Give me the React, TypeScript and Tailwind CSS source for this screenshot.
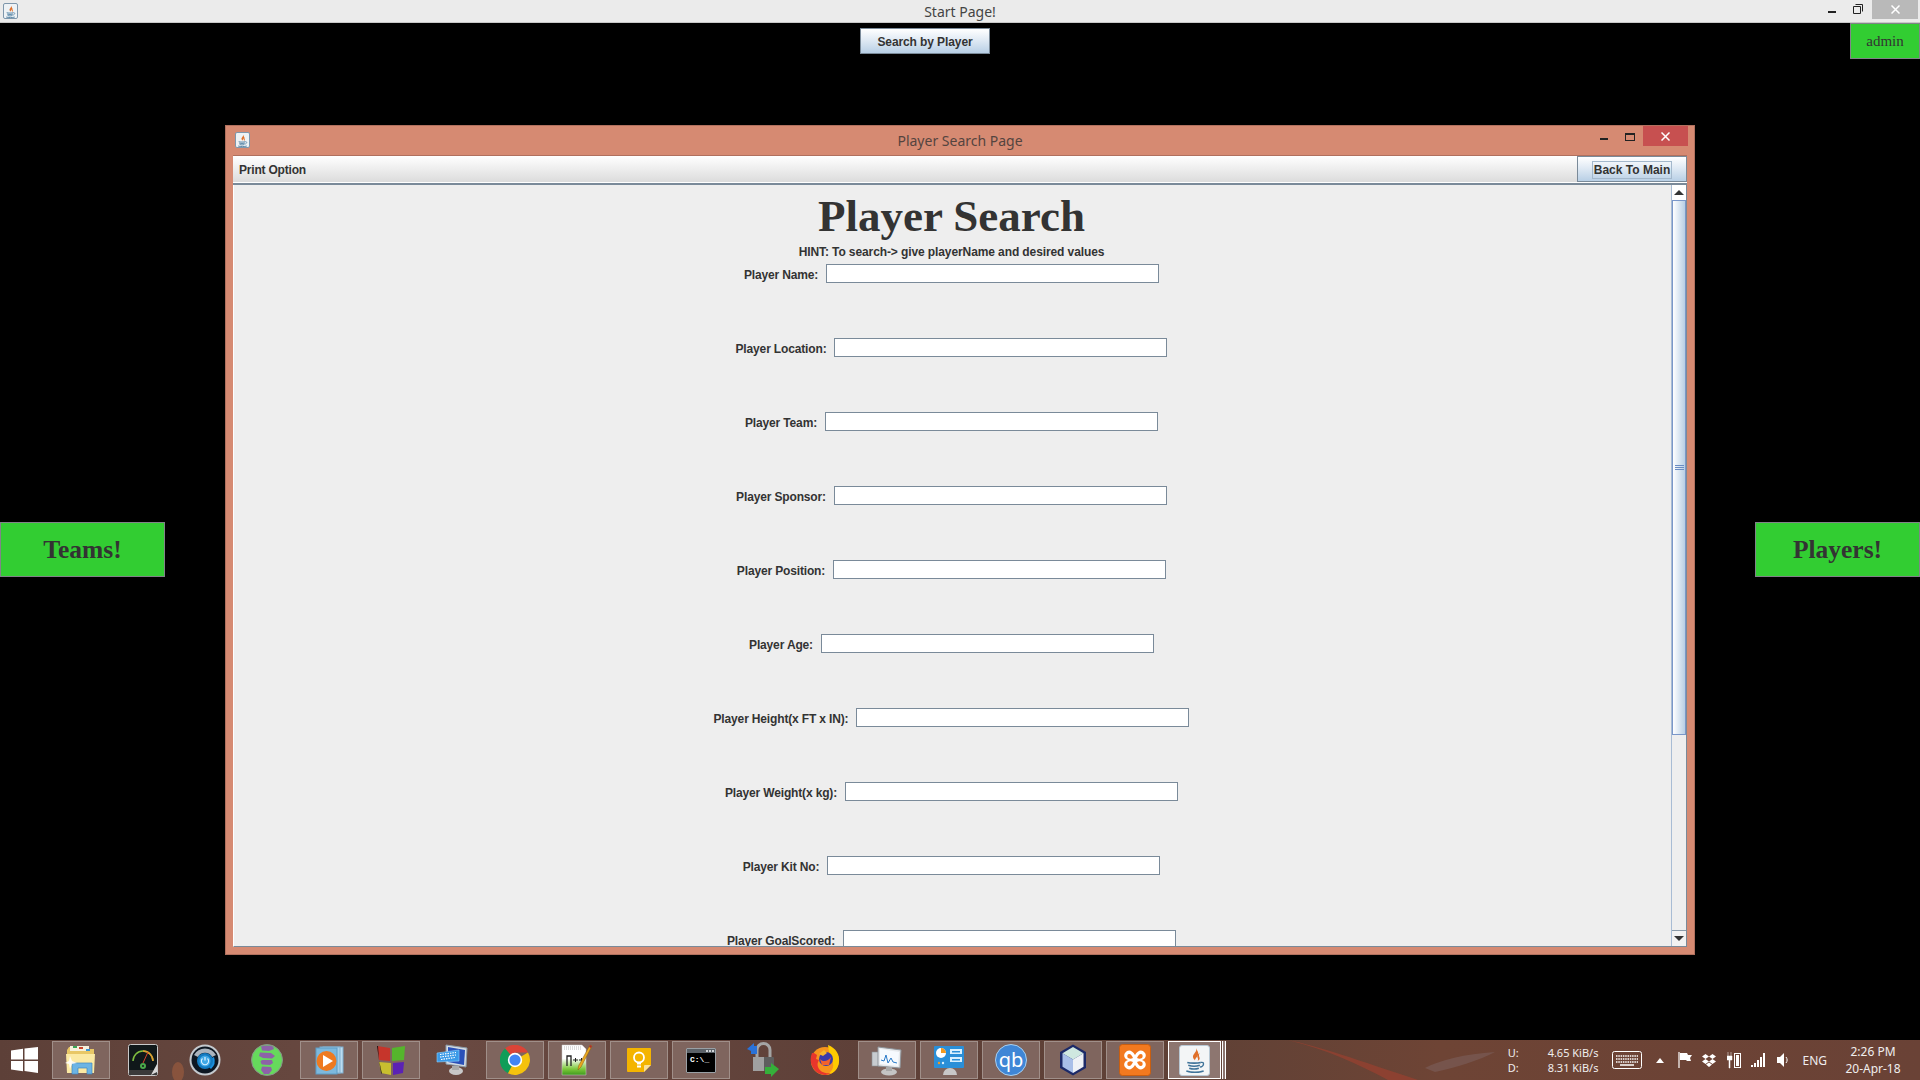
const rows = [
  "Player Name:",
  "Player Location:",
  "Player Team:",
  "Player Sponsor:",
  "Player Position:",
  "Player Age:",
  "Player Height(x FT x IN):",
  "Player Weight(x kg):",
  "Player Kit No:",
  "Player GoalScored:",
];

const JavaCup = ({ size = 16 }: { size?: number }) => (
  <svg width={size} height={size} viewBox="5 2 22 27">
    <path d="M17 3c2 4-4 6-3 10 .4 1.500 1.500 2 2 3-.4-2 5-5 3-9-.5-1-1.200-2.600-2-4z" fill="#e0702a" />
    <path d="M21 8c-3 2-3 4-2 6 .4 1 .2 2-.5 2.500 2-.5 3-2 2-4-.6-1.500-.5-3 .5-4.500z" fill="#e0702a" />
    <path d="M8 18c3 1 11 1 14 0M9 21c3 1 9 1 12 0M10 24c3 1 7 1 10 0M7 27c5 1.500 13 1.500 18 0" stroke="#3f7399" strokeWidth="1.700" fill="none" />
    <path d="M22 18c4-1 4 4-1 5" stroke="#3f7399" strokeWidth="1.300" fill="none" />
  </svg>
);

const WindowIcon = () => (
  <div className="flex h-[16px] w-[15px] items-center justify-center rounded-[2px] border border-[#7f97ac] bg-[#eef2f5]">
    <JavaCup size={13} />
  </div>
);

const Explorer = () => (
  <svg width="34" height="34" viewBox="0 0 34 34">
    <path d="M3 7l2-3h14l2 2h9v22H3z" fill="#e8c766" />
    <rect x="6" y="3" width="19" height="5" fill="#f6f1dc" />
    <rect x="9" y="3" width="4" height="2" fill="#3aa655" />
    <rect x="15" y="4" width="4" height="2" fill="#c9452f" />
    <rect x="22" y="6" width="4" height="2" fill="#3a96d8" />
    <path d="M2 11h29l-1 19H3z" fill="#fbe9a3" />
    <path d="M8 20h20v11h-5v-6H14v6H8z" fill="#6cb4e4" stroke="#3f86bf" strokeWidth=".7" />
    <path d="M6 13l2 5 5 2-5 1-2 5-1-5-4-1 4-2z" fill="#ffffff" opacity=".85" />
  </svg>
);

const Meter = () => (
  <svg width="30" height="32" viewBox="0 0 30 32">
    <rect x=".5" y=".5" width="29" height="31" rx="2" fill="#10181a" stroke="#c9c9c9" />
    <rect x="1" y="26" width="28" height="5" fill="#3a3a3a" />
    <path d="M5 17a10 10 0 0 1 20 0" fill="none" stroke="#7fbf3f" strokeWidth="1.500" />
    <path d="M15 7a10 10 0 0 1 10 10" fill="none" stroke="#e09a30" strokeWidth="1.500" />
    <path d="M15 19l5-11" stroke="#d8402a" strokeWidth="1" />
    <circle cx="15" cy="22" r="3" fill="#4ba84a" />
    <circle cx="15" cy="22" r="1" fill="#10181a" />
    <path d="M29 20v8l-6 3z" fill="#d8d8d8" />
  </svg>
);

const PowerOrb = () => (
  <svg width="32" height="32" viewBox="0 0 32 32">
    <circle cx="16" cy="16" r="15.500" fill="#c4c9ce" />
    <circle cx="16" cy="16" r="13.500" fill="#0d1722" />
    <path d="M5 11a12.500 12.500 0 0 1 22 0l-4 2a8 8 0 0 0-14 0z" fill="#aab4be" />
    <path d="M25 13a11 11 0 0 1-3 12l-3-3a7 7 0 0 0 2-7z" fill="#1b8fdc" />
    <circle cx="16" cy="17" r="8" fill="#127ac0" />
    <circle cx="16" cy="17" r="5.500" fill="#3fa8e6" />
    <path d="M16 13v3.500" stroke="#d8f0ff" strokeWidth="1.300" />
    <path d="M13.500 14.500a3.600 3.600 0 1 0 5 0" stroke="#d8f0ff" strokeWidth="1.100" fill="none" />
  </svg>
);

const Globe = () => (
  <svg width="32" height="32" viewBox="0 0 32 32">
    <circle cx="16" cy="16" r="15.500" fill="#66d95c" stroke="#8a8f8a" />
    <path d="M10 2.500c4-1.500 8-1.500 12 0l1 2.500-5 2-7-.5z" fill="#8d62a8" />
    <path d="M9 8.500l11 .5 4 3-3 2.500-9-.5-4-2z" fill="#8d62a8" />
    <path d="M11 16h10l1 3-3 2-8-.5-2-2.500z" fill="#8d62a8" />
    <path d="M11 22.500l9 .5 1 3-3 4h-5l-3-4z" fill="#8d62a8" />
    <path d="M2 12l4 1 1 3 3 2-1 3-4-1-3-4zM27 11l3 2 .5 5-2 3-3-1v-4z" fill="#66d95c" />
  </svg>
);

const Media = () => (
  <svg width="30" height="30" viewBox="0 0 30 30">
    <rect x="9" y="2" width="20" height="26" fill="#bcdcf0" stroke="#7fb0d0" />
    <rect x="6" y="2" width="20" height="26" fill="#a6cfe8" stroke="#7fb0d0" />
    <rect x="2" y="3" width="21" height="26" fill="#7db9dd" stroke="#5d9cc4" />
    <circle cx="12.500" cy="16" r="10" fill="#ee7a20" />
    <path d="M9 10l10 6-10 6z" fill="#ffffff" />
  </svg>
);

const WinFlag = () => (
  <svg width="32" height="32" viewBox="0 0 32 32">
    <path d="M2 2l13 2v13L4 16z" fill="#c6352b" />
    <path d="M17 4l13-2-1 14-12 1z" fill="#55b52c" />
    <path d="M4 18l12 1v12L6 29z" fill="#c8bf2f" />
    <path d="M18 19l11-1-1 11-10 2z" fill="#5b22b4" />
    <path d="M2 2l2 14 2 13 1 1-3-14-1-14z" fill="#161616" />
  </svg>
);

const KeyboardPc = () => (
  <svg width="34" height="34" viewBox="0 0 34 34">
    <path d="M10 2l21 3-1 19-20-3z" fill="#d4dbe2" stroke="#8b99a6" />
    <path d="M12 4l17 3-1 15-16-3z" fill="#2a50b8" />
    <ellipse cx="20" cy="28" rx="7" ry="4" fill="#c8c8c8" />
    <rect x="16" y="23" width="7" height="4" fill="#aaaaaa" />
    <path d="M1 10l22-3v11L1 19z" fill="#3a9ae8" stroke="#8fd0fb" strokeWidth=".6" />
    <path d="M4 11.500l16-2M4 14l16-2M5 16.500l14-2" stroke="#ffffff" strokeWidth="1.200" strokeDasharray="1.500 1" />
  </svg>
);

const Chrome = () => (
  <svg width="30" height="30" viewBox="0 0 30 30">
    <path d="M15 15L5 3.500A15 15 0 0 1 28 7.500H15z" fill="#db4437" />
    <path d="M15 15L5 3.500A15 15 0 0 0 8 28.200z" fill="#0f9d58" />
    <path d="M15 15L28 7.500A15 15 0 0 1 8 28.200z" fill="#f4c20d" />
    <circle cx="15" cy="15" r="7.200" fill="#ffffff" />
    <circle cx="15" cy="15" r="5.600" fill="#4285f4" />
  </svg>
);

const NotepadPP = () => (
  <svg width="32" height="34" viewBox="0 0 32 34">
    <defs>
      <linearGradient id="npp" x1="0" y1="0" x2="0" y2="1">
        <stop offset="0.450" stopColor="#ffffff" />
        <stop offset="0.800" stopColor="#7cc83a" />
        <stop offset="1" stopColor="#3f9a1e" />
      </linearGradient>
    </defs>
    <path d="M1 2h20l4 4v26H1z" fill="url(#npp)" stroke="#c8c8c8" strokeWidth=".5" />
    <path d="M3 4h17M3 6h17" stroke="#a8a8a8" strokeWidth=".8" strokeDasharray="1 1" />
    <path d="M6 23V13h4v10" fill="none" stroke="#222222" strokeWidth="1.300" />
    <path d="M12 17h5M14.500 15v4M18 17h5M20.500 15v4" stroke="#222222" strokeWidth="1" />
    <path d="M29 2l2 1-11 21-3 3 .5-4z" fill="#e8a820" stroke="#8a5a10" strokeWidth=".5" />
    <path d="M29 2l2 1-1 2-2-1z" fill="#a83030" />
  </svg>
);

const Keep = () => (
  <svg width="26" height="26" viewBox="0 0 26 26">
    <path d="M1 2a1 1 0 0 1 1-1h22a1 1 0 0 1 1 1v16l-7 7H2a1 1 0 0 1-1-1z" fill="#f4b400" />
    <path d="M25 18h-6a1 1 0 0 0-1 1v6z" fill="#fae09a" />
    <circle cx="13" cy="10.500" r="5" fill="none" stroke="#ffffff" strokeWidth="1.800" />
    <path d="M11 16.500h4M11 19.500h4" stroke="#ffffff" strokeWidth="1.800" />
  </svg>
);

const Cmd = () => (
  <div className="flex h-[25px] w-[30px] flex-col rounded-[1px] border border-[#9aa0a5] bg-black">
    <div className="flex h-[4px] justify-end gap-[1px] bg-[#5b6167] pr-[1px] pt-[1px]">
      <div className="size-[2px] bg-[#cfd3d6]" />
      <div className="size-[2px] bg-[#cfd3d6]" />
      <div className="size-[2px] bg-[#cfd3d6]" />
    </div>
    <div className="pl-[3px] pt-[2px] font-['Liberation_Mono',monospace] text-[8px] leading-[10px] font-bold text-white">C:\_</div>
  </div>
);

const LockSync = () => (
  <svg width="34" height="36" viewBox="0 0 34 36">
    <path d="M11 15V8a6.500 6.500 0 0 1 13 0v7" fill="none" stroke="#a4a4a4" strokeWidth="3" />
    <rect x="7" y="15" width="21" height="14" rx="1" fill="#5e5e5e" />
    <rect x="7" y="15" width="11" height="14" fill="#a0a0a0" />
    <path d="M1 7l7-6v3h3v8H5V9z" fill="#2a72d8" />
    <path d="M33 27l-8 8v-3h-6v-7h6v-4z" fill="#35b03a" />
  </svg>
);

const Firefox = () => (
  <svg width="30" height="32" viewBox="0 0 30 32">
    <circle cx="15" cy="17" r="14" fill="#f7941e" />
    <path d="M18 1c8 3 12 10 11 17-1 8-7 13-14 13 6-2 9-6 8-12-1-5-4-8-5-18z" fill="#ffcb00" />
    <path d="M2 9c-3 7-1 15 6 20 4 2 9 3 13 0-6 1-11-1-13-6-1-3 0-5 1-7l-3-1 1-4-3-2z" fill="#e8362c" />
    <circle cx="16" cy="15" r="7" fill="#3b3aa8" />
    <path d="M10 15c2 3 8 3 11-2l-2 8-7 0z" fill="#f2622c" />
    <path d="M9 10l5-4 3 3-4 3z" fill="#f7b52c" />
  </svg>
);

const PerfMon = () => (
  <svg width="32" height="32" viewBox="0 0 32 32">
    <rect x="1" y="8" width="7" height="14" fill="#c8ccd0" stroke="#8a8f94" strokeWidth=".6" />
    <path d="M7 3l23 3-1 18-22-2z" fill="#e6e9ec" stroke="#8f959b" />
    <path d="M9 5l19 3-1 14-18-2z" fill="#f6fafe" />
    <path d="M10 16l3 1 2-6 2 8 3-5 2 4 4 1" fill="none" stroke="#2a7ac8" strokeWidth="1" />
    <ellipse cx="18" cy="28" rx="8" ry="3.500" fill="#c4c4c4" />
    <rect x="15" y="23" width="6" height="4" fill="#a8a8a8" />
  </svg>
);

const ControlPanel = () => (
  <svg width="32" height="32" viewBox="0 0 32 32">
    <rect x="1" y="2" width="30" height="22" rx="1" fill="#2a8fd8" />
    <rect x="17" y="5" width="12" height="5" fill="#d8f0ff" />
    <rect x="17" y="13" width="12" height="5" fill="#d8f0ff" />
    <rect x="19" y="7" width="8" height="1.500" fill="#2a8fd8" />
    <rect x="19" y="15" width="8" height="1.500" fill="#2a8fd8" />
    <circle cx="8" cy="9" r="5" fill="#ffffff" />
    <path d="M8 9V4a5 5 0 0 1 5 5z" fill="#f29a1f" />
    <circle cx="6" cy="19" r="1.200" fill="#f29a1f" />
    <circle cx="10" cy="19" r="1.200" fill="#d8f0ff" />
    <path d="M10 31a7 7 0 0 1 14 0z" fill="#c8c8c8" />
  </svg>
);

const Qb = () => (
  <div className="flex size-[32px] items-center justify-center rounded-full border border-[#a8d0f0] bg-[#3f86d6] font-['Noto_Sans',sans-serif] text-[20px] leading-none text-white">
    qb
  </div>
);

const Cube = () => (
  <svg width="30" height="34" viewBox="0 0 30 34">
    <path d="M15 1.500l13 7.500v16l-13 7.500L2 25V9z" fill="#1c2a68" />
    <path d="M15 4l10.500 6.200L15 16.500 4.500 10.200z" fill="#cfe8e0" />
    <path d="M4.500 10.200L15 16.500V30L4.500 23.800z" fill="#a8bfe8" />
    <path d="M25.500 10.200L15 16.500V30l10.500-6.200z" fill="#eef2f6" />
  </svg>
);

const Xampp = () => (
  <svg width="32" height="32" viewBox="0 0 32 32">
    <rect x=".5" y=".5" width="31" height="31" rx="3" fill="#f2791f" stroke="#c85e10" />
    <path d="M6 9c3-4 7-3 10 2 3-5 7-6 10-2 2 3 0 6-3 7 3 1 5 4 3 7-3 4-7 3-10-2-3 5-7 6-10 2-2-3 0-6 3-7-3-1-5-4-3-7z" fill="#ffffff" />
    <path d="M10 10c2 0 3 2 4 4-2 1-3 1-5 0-1-1-1-4 1-4zM22 10c-2 0-3 2-4 4 2 1 3 1 5 0 1-1 1-4-1-4zM10 22c2 0 3-2 4-4-2-1-3-1-5 0-1 1-1 4 1 4zM22 22c-2 0-3-2-4-4 2-1 3-1 5 0 1 1 1 4-1 4z" fill="#f2791f" />
  </svg>
);

const JavaTile = () => (
  <div className="flex size-[31px] items-center justify-center rounded-[3px] border border-[#b8c8d4] bg-[#f3f5f6]">
    <JavaCup size={26} />
  </div>
);

const taskItems = [
  { icon: <Explorer />, open: true },
  { icon: <Meter />, open: false },
  { icon: <PowerOrb />, open: false },
  { icon: <Globe />, open: false },
  { icon: <Media />, open: true },
  { icon: <WinFlag />, open: true },
  { icon: <KeyboardPc />, open: false },
  { icon: <Chrome />, open: true },
  { icon: <NotepadPP />, open: true },
  { icon: <Keep />, open: true },
  { icon: <Cmd />, open: true },
  { icon: <LockSync />, open: false },
  { icon: <Firefox />, open: false },
  { icon: <PerfMon />, open: true },
  { icon: <ControlPanel />, open: true },
  { icon: <Qb />, open: true },
  { icon: <Cube />, open: true },
  { icon: <Xampp />, open: true },
];

const GreenBox = ({ label }: { label: string }) => (
  <div className="flex h-[55px] w-[165px] items-center justify-center border border-[#808488] bg-[#32cd32] pt-[2px] font-['Liberation_Serif',serif] text-[25.500px] font-bold text-[#333333]">
    {label}
  </div>
);

const Tray = () => (
  <div className="ml-auto flex h-full items-center font-['Noto_Sans',sans-serif] text-[11px] leading-[15px] text-[#f0eeee]">
    <div className="flex flex-col">
      <span>U:</span>
      <span>D:</span>
    </div>
    <div className="ml-[29px] flex flex-col items-end">
      <span>4.65 KiB/s</span>
      <span>8.31 KiB/s</span>
    </div>
    <svg className="ml-[14px]" width="30" height="18" viewBox="0 0 30 18">
      <rect x=".5" y=".5" width="29" height="17" rx="2" fill="none" stroke="#ffffff" />
      <path d="M4 5h22M4 8h22M4 11h22" stroke="#ffffff" strokeWidth="1.500" strokeDasharray="1.500 .8" />
      <path d="M8 14h14" stroke="#ffffff" strokeWidth="1.500" />
    </svg>
    <svg className="ml-[14px]" width="8" height="5" viewBox="0 0 8 5">
      <path d="M0 5l4-5 4 5z" fill="#ffffff" />
    </svg>
    <svg className="ml-[14px]" width="14" height="16" viewBox="0 0 14 16">
      <path d="M1 0v16" stroke="#ffffff" strokeWidth="1.200" />
      <path d="M2 1h7l1 2h4l-2 3 1 3H9L8 8H2z" fill="#ffffff" />
    </svg>
    <svg className="ml-[10px]" width="14" height="14" viewBox="0 0 14 14">
      <path d="M3.500 1L7 3.500 3.500 6 0 3.500zM10.500 1L14 3.500 10.500 6 7 3.500zM3.500 6L7 8.500 3.500 11 0 8.500zM10.500 6L14 8.500 10.500 11 7 8.500zM7 9.500l3 2L7 14l-3-2.500z" fill="#ffffff" />
    </svg>
    <svg className="ml-[11px]" width="14" height="18" viewBox="0 0 14 18">
      <path d="M1 1v4M4 1v4M0 5h5v4H3v8H2V9H0z" fill="#ffffff" stroke="#ffffff" strokeWidth=".5" />
      <rect x="7.500" y="2.500" width="6" height="14" fill="none" stroke="#ffffff" />
      <rect x="9" y="4" width="3" height="11" fill="#ffffff" />
    </svg>
    <svg className="ml-[10px]" width="15" height="14" viewBox="0 0 15 14">
      <path d="M0 12h2v2H0zM3 10h2v4H3zM6 7h2v7H6zM9 4h2v10H9zM12 0h2v14h-2z" fill="#ffffff" />
    </svg>
    <svg className="ml-[11px]" width="12" height="16" viewBox="0 0 12 16">
      <path d="M0 5h3l4-4v14l-4-4H0z" fill="#ffffff" />
      <path d="M9 5c1.500 2 1.500 4 0 6" stroke="#ffffff" fill="none" />
    </svg>
    <span className="ml-[13px] text-[12px]">ENG</span>
    <div className="ml-[19px] mr-[20px] flex w-[54px] flex-col items-center whitespace-nowrap text-[12px] leading-[17px]">
      <span>2:26 PM</span>
      <span>20-Apr-18</span>
    </div>
  </div>
);

export default function App() {
  return (
    <div className="flex h-screen w-full flex-col overflow-hidden bg-black font-['Liberation_Sans',Arial,sans-serif]">
      {/* Start Page frame title */}
      <div className="relative flex h-[23px] shrink-0 items-center justify-center border-b border-[#c8c8c8] bg-[#ebebeb] font-['Noto_Sans',sans-serif] text-[14px] text-[#444444]">
        <div className="absolute left-[3px] top-[3px]">
          <WindowIcon />
        </div>
        Start Page!
        <div className="absolute right-[2px] top-0 flex h-[19px] items-start">
          <div className="mr-[17px] mt-[11px] h-[2px] w-[8px] bg-[#222222]" />
          <svg className="mr-[9px] mt-[4px]" width="10" height="10" viewBox="0 0 10 10">
            <path d="M2.500.5h7v7M.5 2.500h7v7h-7z" fill="none" stroke="#222222" />
          </svg>
          <div className="flex h-[19px] w-[46px] items-center justify-center bg-[#b9b9b9]">
            <svg width="9" height="9" viewBox="0 0 9 9">
              <path d="M.5.5l8 8M8.500.5l-8 8" stroke="#ffffff" strokeWidth="1.500" />
            </svg>
          </div>
        </div>
      </div>

      {/* desktop area */}
      <div className="relative min-h-0 flex-1">
        <div className="flex items-start">
          <button className="ml-[860px] mt-[5px] h-[26px] w-[130px] border border-[#7a8a99] bg-gradient-to-b from-white via-[#dde8f3] to-[#b8cfe5] pt-[1px] text-[12px] font-bold tracking-[-0.1px] text-[#333333]">
            Search by Player
          </button>
          <div className="ml-auto flex h-[36px] w-[70px] items-center justify-center border border-[#808488] bg-[#32cd32] pt-[1px] font-['Liberation_Serif',serif] text-[15px] text-[#333333]">
            admin
          </div>
        </div>
        <div className="mt-[463px] flex justify-between">
          <GreenBox label="Teams!" />
          <GreenBox label="Players!" />
        </div>

        {/* Player Search Page internal frame */}
        <div className="absolute left-[225px] top-[102px] flex h-[830px] w-[1470px] flex-col border border-[#b0705e] bg-[#d68a72] px-[7px] pb-[7px]">
          <div className="relative flex h-[29px] shrink-0 items-center justify-center font-['Noto_Sans',sans-serif] text-[14px] text-[#54443f]">
            <div className="absolute left-[2px] top-[6px]">
              <WindowIcon />
            </div>
            Player Search Page
            <div className="absolute right-[-1px] top-0 flex h-[20px] items-start">
              <div className="mr-[17px] mt-[12px] h-[2px] w-[8px] bg-[#222222]" />
              <div className="mr-[8px] mt-[7px] h-[8px] w-[10px] border border-t-2 border-[#222222]" />
              <div className="flex h-[20px] w-[45px] items-center justify-center bg-[#c75050]">
                <svg width="9" height="9" viewBox="0 0 9 9">
                  <path d="M.5.5l8 8M8.500.5l-8 8" stroke="#ffffff" strokeWidth="1.500" />
                </svg>
              </div>
            </div>
          </div>

          <div className="flex min-h-0 flex-1 flex-col border-t border-[#b0705e] bg-white">
            {/* menu bar */}
            <div className="flex h-[26px] shrink-0 items-center justify-between bg-gradient-to-b from-white to-[#dcdcdc] pl-[6px]">
              <span className="pt-[2px] text-[12px] font-bold tracking-[-0.2px] text-[#333333]">Print Option</span>
              <button className="flex h-[26px] w-[110px] items-center justify-center border border-[#7a8a99] bg-gradient-to-b from-white via-[#dde8f3] to-[#b8cfe5] pt-[1px]">
                <span className="border border-[#a3b8cc] px-[1px] text-[12px] leading-[16px] font-bold text-[#333333]">Back To Main</span>
              </button>
            </div>
            <div className="h-[1px] shrink-0 bg-white" />
            <div className="h-[2px] shrink-0 bg-[#7a8a99]" />

            <div className="flex min-h-0 flex-1 border-r border-l border-b border-r-[#7a8a99] border-l-white border-b-[#7a8a99] bg-[#eeeeee]">
              <div className="min-w-0 flex-1 overflow-hidden pr-[2px] text-[#333333]">
                <h1 className="h-[59px] pt-[7px] text-center font-['Liberation_Serif',serif] text-[45px] leading-[49px] font-bold">
                  Player Search
                </h1>
                <p className="mb-[4px] h-[16px] text-center text-[12px] leading-[16px] font-bold tracking-[-0.1px]">
                  HINT: To search-&gt; give playerName and desired values
                </p>
                {rows.map((label) => (
                  <div key={label} className="mb-[55px] flex h-[19px] items-center justify-center gap-2 text-[12px] font-bold tracking-[-0.15px]">
                    <span className="pt-[2px]">{label}</span>
                    <input className="h-[19px] w-[333px] border border-[#7a8a99] bg-white outline-none" />
                  </div>
                ))}
              </div>

              {/* scrollbar */}
              <div className="flex w-[15px] shrink-0 flex-col border-l border-[#a8bcd4] bg-[#eeeeee]">
                <div className="flex h-[15px] shrink-0 items-center justify-center bg-white">
                  <div className="h-0 w-0 border-x-[5px] border-b-[5px] border-x-transparent border-b-[#333333]" />
                </div>
                <div className="flex h-[535px] shrink-0 flex-col items-center justify-center border border-[#7a97c9] bg-gradient-to-r from-white to-[#b8cfe5]">
                  <div className="flex w-[9px] flex-col gap-[1px]">
                    <div className="h-[1px] bg-[#6b8cc2]" />
                    <div className="h-[1px] bg-[#6b8cc2]" />
                    <div className="h-[1px] bg-[#6b8cc2]" />
                  </div>
                </div>
                <div className="flex-1" />
                <div className="flex h-[16px] shrink-0 items-center justify-center border-t border-[#8a9aa8] bg-[#f2f2f2]">
                  <div className="h-0 w-0 border-x-[5px] border-t-[5px] border-x-transparent border-t-[#333333]" />
                </div>
              </div>
            </div>
          </div>
        </div>
      </div>

      {/* taskbar */}
      <div className="relative flex h-[40px] shrink-0 items-center overflow-hidden bg-[linear-gradient(90deg,#5d4038_0%,#6a4a42_22%,#5e4038_45%,#5f4136_62%,#6e4435_75%,#6a4236_100%)]">
        <svg className="absolute left-0 top-0" width="1920" height="40" viewBox="0 0 1920 40">
          <ellipse cx="178" cy="32" rx="6" ry="10" fill="#a8603e" opacity=".55" />
          <path d="M1288 0c30 6 70 20 130 40h-30c-30-16-60-30-100-40z" fill="#a8402e" opacity=".55" />
          <path d="M1425 28c15-8 40-14 70-16-15 8-40 16-60 20z" fill="#8b7a80" opacity=".3" />
        </svg>
        <div className="relative flex h-full w-[52px] shrink-0 items-center pl-[11px]">
          <svg width="27" height="26" viewBox="0 0 27 26">
            <path d="M0 3.500l12-1.800v10.800H0zM13.500 1.500L27 0v12.500H13.500zM0 14h12v10.300L0 22.500zM13.500 14H27v12l-13.500-2z" fill="#ffffff" />
          </svg>
        </div>
        <div className="relative flex h-full items-center gap-1">
          {taskItems.map((item, i) => (
            <div
              key={i}
              className={`flex h-[38px] w-[58px] items-center justify-center ${item.open ? "border border-[#a08f89] bg-[#7f655e]" : ""}`}
            >
              {item.icon}
            </div>
          ))}
          <div className="flex h-[38px] w-[53px] items-center justify-center border border-white bg-[#8d7670]">
            <JavaTile />
          </div>
          <div className="-ml-[3px] h-[38px] w-[4px] border-x border-white bg-[#8d7670]" />
        </div>
        <div className="relative ml-auto h-full">
          <Tray />
        </div>
      </div>
    </div>
  );
}
